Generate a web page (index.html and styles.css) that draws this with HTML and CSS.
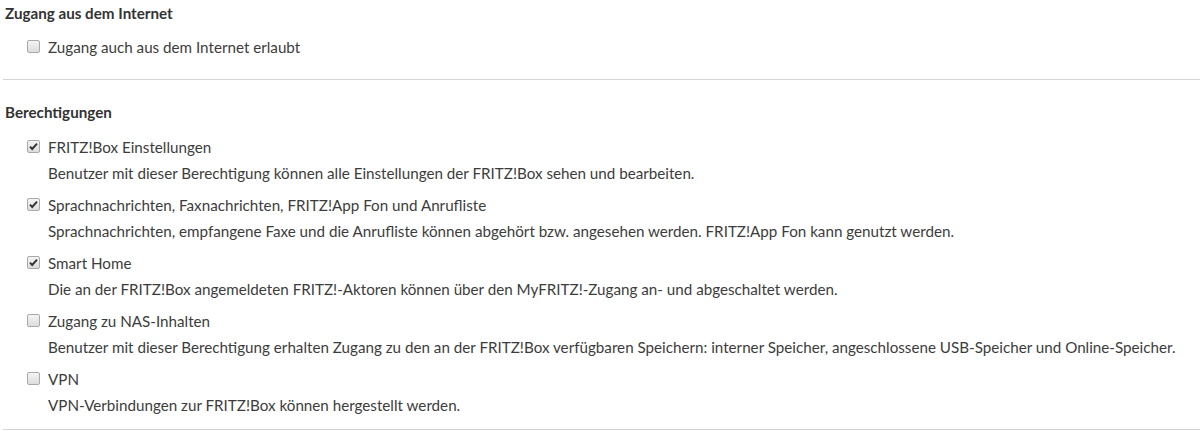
FILE: index.html
```html
<!DOCTYPE html>
<html>
<head>
	<meta charset="utf-8">
	<title>Zugang und Berechtigungen</title>
	<link rel="stylesheet" href="styles.css">
</head>
<body>
	<div class="page">
		<h4 class="title">Zugang aus dem Internet</h4>
		<div class="opt first">
			<div class="row"><span class="box"></span><span>Zugang auch aus dem Internet erlaubt</span></div>
		</div>
		<hr>
		<h4 class="title second">Berechtigungen</h4>
		<div class="list">
			<div class="opt">
				<div class="row"><span class="box on"><svg viewBox="0 0 13 13" width="13" height="13"><path d="M3 6.6 L5.2 9 L10 3.6" fill="none" stroke="#333" stroke-width="1.9"/></svg></span><span>FRITZ!Box Einstellungen</span></div>
				<div class="desc">Benutzer mit dieser Berechtigung können alle Einstellungen der FRITZ!Box sehen und bearbeiten.</div>
			</div>
			<div class="opt">
				<div class="row"><span class="box on"><svg viewBox="0 0 13 13" width="13" height="13"><path d="M3 6.6 L5.2 9 L10 3.6" fill="none" stroke="#333" stroke-width="1.9"/></svg></span><span>Sprachnachrichten, Faxnachrichten, FRITZ!App Fon und Anrufliste</span></div>
				<div class="desc">Sprachnachrichten, empfangene Faxe und die Anrufliste können abgehört bzw. angesehen werden. FRITZ!App Fon kann genutzt werden.</div>
			</div>
			<div class="opt">
				<div class="row"><span class="box on"><svg viewBox="0 0 13 13" width="13" height="13"><path d="M3 6.6 L5.2 9 L10 3.6" fill="none" stroke="#333" stroke-width="1.9"/></svg></span><span>Smart Home</span></div>
				<div class="desc">Die an der FRITZ!Box angemeldeten FRITZ!-Aktoren können über den MyFRITZ!-Zugang an- und abgeschaltet werden.</div>
			</div>
			<div class="opt">
				<div class="row"><span class="box"></span><span>Zugang zu NAS-Inhalten</span></div>
				<div class="desc">Benutzer mit dieser Berechtigung erhalten Zugang zu den an der FRITZ!Box verfügbaren Speichern: interner Speicher, angeschlossene USB-Speicher und Online-Speicher.</div>
			</div>
			<div class="opt">
				<div class="row"><span class="box"></span><span>VPN</span></div>
				<div class="desc">VPN-Verbindungen zur FRITZ!Box können hergestellt werden.</div>
			</div>
		</div>
		<hr class="bottom">
	</div>
</body>
</html>
```

FILE: styles.css
```css
body{
	margin:0;
	font-family:"Lato", "Open Sans", sans-serif;
	font-size:15.2px;
	color:#3c3c3c;
	background:#fff;
}
.page{
	padding-left:4px;
}
.title{
	margin:0;
	line-height:26px;
	font-size:15.2px;
	font-weight:bold;
	color:#333;
	padding-left:1px;
}
.title.second{
	margin-top:19px;
}
.opt{
	padding-left:23px;
	margin-bottom:4px;
}
.opt.first{
	margin-top:7px;
	margin-bottom:0;
}
.row{
	display:flex;
	align-items:center;
	gap:8px;
	height:27px;
}
.box{
	width:11px;
	height:11px;
	border:1px solid #a9a9a9;
	border-radius:2px;
	background:linear-gradient(#f4f4f4, #dcdcdc);
	position:relative;
	flex-shrink:0;
}
.box svg{
	position:absolute;
	left:-1px;
	top:-1px;
}
.desc{
	line-height:27px;
	padding-left:21px;
}
.list{
	margin-top:8px;
}
hr{
	border:none;
	border-top:1px solid #d4d4d4;
	margin:19px 0 0 -1px;
}
hr.bottom{
	margin-top:10px;
}
```
